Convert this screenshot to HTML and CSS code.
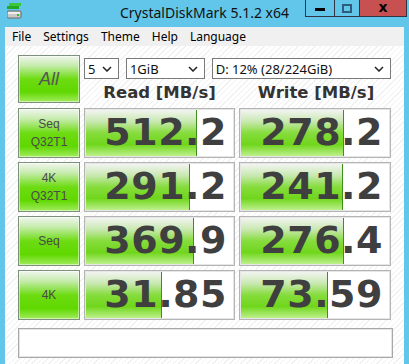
FILE: index.html
```html
<!DOCTYPE html>
<html lang="en">
<head>
    <meta charset="UTF-8">
    <title>CrystalDiskMark 5.1.2 x64</title>
    <link rel="stylesheet" href="styles.css">
</head>
<body>
    <div class="window">
        <div class="titlebar">
            <svg class="app-icon" width="16" height="16" viewBox="0 0 16 16">
                <rect x="2" y="0" width="12" height="3" fill="#3cc83c"/>
                <rect x="0" y="3" width="12" height="3" fill="#22a822"/>
                <rect x="0" y="8" width="14" height="7" rx="1" fill="#c8c8c8" stroke="#6a6a6a"/>
                <rect x="1" y="9" width="12" height="2" fill="#eeeeee"/>
                <rect x="10" y="11" width="2" height="2" fill="#2fb82f"/>
            </svg>
            <div class="title">CrystalDiskMark 5.1.2 x64</div>
            <div class="winbtns">
                <div class="wbtn min"><span class="dash"></span></div>
                <div class="wbtn max"><span class="box"></span></div>
                <div class="wbtn close">x</div>
            </div>
        </div>
        <div class="menubar">
            <span>File</span>
            <span>Settings</span>
            <span>Theme</span>
            <span>Help</span>
            <span>Language</span>
        </div>
        <div class="content">
            <div class="grid">
                <div class="btn all">All</div>
                <div class="top">
                    <div class="combos">
                        <div class="combo c-count">5<svg viewBox="0 0 10 6"><path d="M1 1l4 4 4-4" fill="none" stroke="#222" stroke-width="1.5"/></svg></div>
                        <div class="combo c-size">1GiB<svg viewBox="0 0 10 6"><path d="M1 1l4 4 4-4" fill="none" stroke="#222" stroke-width="1.5"/></svg></div>
                        <div class="combo c-drive">D: 12% (28/224GiB)<svg viewBox="0 0 10 6"><path d="M1 1l4 4 4-4" fill="none" stroke="#222" stroke-width="1.5"/></svg></div>
                    </div>
                    <div class="heads">
                        <div class="head">Read [MB/s]</div>
                        <div class="head">Write [MB/s]</div>
                    </div>
                </div>

                <div class="btn label">Seq<br>Q32T1</div>
                <div class="val"><span class="fill" style="width:74%"></span><span class="num">512.2</span></div>
                <div class="val"><span class="fill" style="width:68%"></span><span class="num">278.2</span></div>

                <div class="btn label">4K<br>Q32T1</div>
                <div class="val"><span class="fill" style="width:69%"></span><span class="num">291.2</span></div>
                <div class="val"><span class="fill" style="width:67%"></span><span class="num">241.2</span></div>

                <div class="btn label">Seq</div>
                <div class="val"><span class="fill" style="width:72%"></span><span class="num">369.9</span></div>
                <div class="val"><span class="fill" style="width:68%"></span><span class="num">276.4</span></div>

                <div class="btn label">4K</div>
                <div class="val"><span class="fill" style="width:50%"></span><span class="num">31.85</span></div>
                <div class="val"><span class="fill" style="width:57%"></span><span class="num">73.59</span></div>
            </div>
            <div class="comment"></div>
        </div>
    </div>
</body>
</html>
```

FILE: styles.css
```css
body {
    margin: 0;
    background: #61c6ea;
    font-family: "Noto Sans", "Liberation Sans", sans-serif;
}

.window {
    width: 409px;
    height: 364px;
    padding: 0 5px;
    box-sizing: border-box;
    display: flex;
    flex-direction: column;
}

.titlebar {
    height: 27px;
    display: flex;
    align-items: flex-start;
    position: relative;
    margin: 0 -5px;
}

.app-icon {
    margin: 3px 0 0 7px;
}

.title {
    position: absolute;
    left: 0;
    right: 0;
    top: 3px;
    text-align: center;
    font-size: 14px;
    color: #111;
}

.winbtns {
    display: flex;
    margin-left: auto;
    margin-right: 2px;
    height: 18px;
    position: relative;
}

.wbtn {
    height: 17px;
    border: 1px solid #334;
    border-top: none;
    box-sizing: border-box;
    display: flex;
    align-items: center;
    justify-content: center;
}

.wbtn.min {
    width: 30px;
}

.wbtn.max {
    width: 25px;
    border-left: none;
}

.wbtn.close {
    width: 47px;
    border-left: none;
    background: #c75050;
    font-weight: bold;
    font-size: 14px;
    line-height: 1;
    padding-bottom: 2px;
    color: #000;
    font-family: "DejaVu Sans", sans-serif;
}

.dash {
    width: 10px;
    height: 3px;
    background: #000;
    margin-top: 2px;
}

.box {
    width: 6px;
    height: 5px;
    border: 2px solid #2c5e7c;
}

.menubar {
    height: 19px;
    background: #f0f0f0;
    display: flex;
    align-items: center;
    font-size: 12px;
    color: #000;
    padding-left: 7px;
    gap: 12px;
}

.content {
    flex: 1;
    background-color: #fff;
    background-image: repeating-linear-gradient(-45deg, #fff 0 3px, #f1f1f1 3px 4px);
    padding: 9px 11px 0 13px;
}

.grid {
    display: grid;
    grid-template-columns: 62px 151px 152px;
    grid-template-rows: 49px repeat(4, 50px);
    column-gap: 4px;
    row-gap: 4px;
}

.grid > .btn.all {
    margin-bottom: 1px;
}

.btn {
    border: 1px solid #7c907c;
    box-sizing: border-box;
    background: linear-gradient(#f0f6ee 0%, #c8ecb0 20%, #6ddc12 50%, #60d800 78%, #a2ec5e 100%);
    box-shadow: inset 0 0 0 1px rgba(255, 255, 255, 0.5);
    display: flex;
    align-items: center;
    justify-content: center;
    text-align: center;
    color: #4a4a4a;
}

.all {
    font-family: "Liberation Sans", sans-serif;
    font-size: 18px;
    font-style: italic;
    color: #555;
}

.label {
    font-size: 12px;
    line-height: 18px;
    font-family: "Liberation Sans", sans-serif;
}

.top {
    grid-column: 2 / 4;
    display: flex;
    flex-direction: column;
}

.combos {
    display: flex;
    gap: 7px;
    margin-top: 3px;
}

.combo {
    height: 21px;
    border: 1px solid #7a7a7a;
    box-sizing: border-box;
    background: #fff;
    display: flex;
    align-items: center;
    justify-content: space-between;
    padding: 0 6px 0 3px;
    font-size: 13px;
    color: #111;
}

.combo svg {
    width: 10px;
    height: 6px;
}

.c-count {
    width: 35px;
}

.c-size {
    width: 79px;
}

.c-drive {
    width: 180px;
}

.heads {
    display: grid;
    grid-template-columns: 151px 152px;
    column-gap: 5px;
    margin-top: 4px;
}

.head {
    text-align: center;
    font-family: "DejaVu Sans", sans-serif;
    font-weight: bold;
    font-size: 16.5px;
    color: #333;
}

.val {
    position: relative;
    border: 1px solid #b4b4b4;
    box-shadow: inset 0 0 0 1px #e6e6e6;
    background: #fff;
    display: flex;
    align-items: center;
    justify-content: flex-end;
    padding-right: 7px;
    overflow: hidden;
}

.fill {
    position: absolute;
    left: 1px;
    top: 1px;
    bottom: 1px;
    background: linear-gradient(#f2f4f1 0%, #c8e8b0 25%, #86dc3c 50%, #70d61c 75%, #bdf08c 100%);
    border-right: 1px solid #3f8f1f;
}

.num {
    position: relative;
    font-family: "DejaVu Sans", sans-serif;
    font-weight: bold;
    font-size: 38px;
    letter-spacing: 0.5px;
    color: #3f3f3f;
    line-height: 1;
    margin-top: -3px;
}

.comment {
    margin-top: 8px;
    width: 375px;
    height: 30px;
    border: 1px solid #a8a8a8;
    box-shadow: inset 0 0 0 1px #e4e4e4;
    box-sizing: border-box;
    background: #fff;
}
```
